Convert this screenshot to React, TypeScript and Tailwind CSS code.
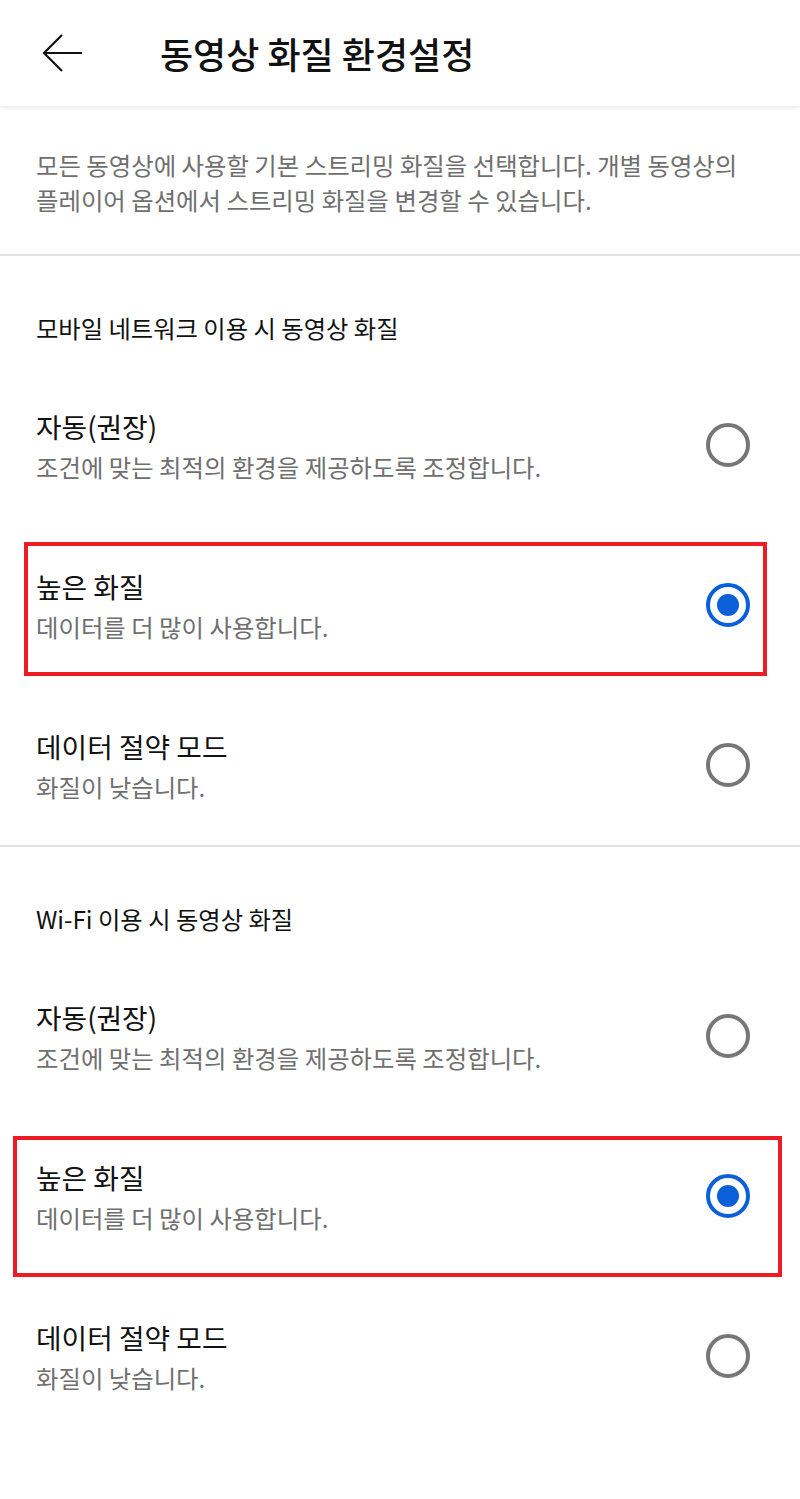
import React, { useState } from "react";

interface QualityOption {
  id: string;
  title: string;
  desc: string;
}

const options: QualityOption[] = [
  { id: "auto", title: "자동(권장)", desc: "조건에 맞는 최적의 환경을 제공하도록 조정합니다." },
  { id: "high", title: "높은 화질", desc: "데이터를 더 많이 사용합니다." },
  { id: "saver", title: "데이터 절약 모드", desc: "화질이 낮습니다." },
];

const Radio: React.FunctionComponent<{ checked: boolean }> = ({ checked }) => (
  <span
    className={
      checked
        ? "flex h-[44px] w-[44px] shrink-0 items-center justify-center rounded-full border-[4px] border-[#0b5fd8]"
        : "flex h-[44px] w-[44px] shrink-0 items-center justify-center rounded-full border-[4px] border-[#767676]"
    }
  >
    {checked && <span className="h-[22px] w-[22px] rounded-full bg-[#0b5fd8]" />}
  </span>
);

const Section: React.FunctionComponent<{
  heading: string;
  marker: string;
}> = ({ heading, marker }) => {
  const [selected, setSelected] = useState("high");

  return (
    <div>
      <div className="pl-[36px] pt-[57px] pb-[22px] text-[24.3px] leading-[30px] text-[#111]">
        {heading}
      </div>
      {options.map((opt) => (
        <div
          key={opt.id}
          onClick={() => setSelected(opt.id)}
          className="relative flex h-[160px] items-center justify-between pl-[36px] pr-[50px]"
        >
          <div className="flex flex-col">
            <span className="text-[27.8px] leading-[36px] text-[#111]">{opt.title}</span>
            <span className="mt-[8px] text-[24.4px] leading-[30px] text-[#6f6f6f]">{opt.desc}</span>
          </div>
          <Radio checked={selected === opt.id} />
          {opt.id === "high" && <span className={marker} />}
        </div>
      ))}
    </div>
  );
};

export default function App() {
  return (
    <div
      className="min-h-[1499px] w-[800px] bg-white"
      style={{ fontFamily: '"Noto Sans CJK KR", "Noto Sans", sans-serif' }}
    >
      <header className="relative z-10 flex h-[106px] items-center bg-white shadow-[0_2px_4px_rgba(0,0,0,0.08)]">
        <button className="ml-[42px] flex h-[42px] w-[42px] items-center justify-center">
          <svg width="42" height="42" viewBox="0 0 42 42" fill="none" stroke="#111" strokeWidth="2.2">
            <path d="M40 21H3" />
            <path d="M20 3L2 21l18 18" />
          </svg>
        </button>
        <h1 className="ml-[76px] text-[36px] font-medium leading-[44px] text-[#111]">동영상 화질 환경설정</h1>
      </header>

      <div className="border-b-2 border-[#e2e2e2] pl-[36px] pr-[20px] pt-[41px] pb-[37px] text-[24.4px] leading-[35px] text-[#6f6f6f]">
        <div className="whitespace-nowrap">모든 동영상에 사용할 기본 스트리밍 화질을 선택합니다. 개별 동영상의</div>
        <div className="whitespace-nowrap">플레이어 옵션에서 스트리밍 화질을 변경할 수 있습니다.</div>
      </div>

      <div className="border-b-2 border-[#e2e2e2]">
        <Section
          heading="모바일 네트워크 이용 시 동영상 화질"
          marker="pointer-events-none absolute top-[17px] bottom-[9px] left-[24px] right-[33px] border-[4px] border-[#ed1c24]"
        />
      </div>

      <Section
        heading="Wi-Fi 이용 시 동영상 화질"
        marker="pointer-events-none absolute top-[20px] bottom-[-1px] left-[13px] right-[18px] border-[4px] border-[#ed1c24]"
      />
    </div>
  );
}
